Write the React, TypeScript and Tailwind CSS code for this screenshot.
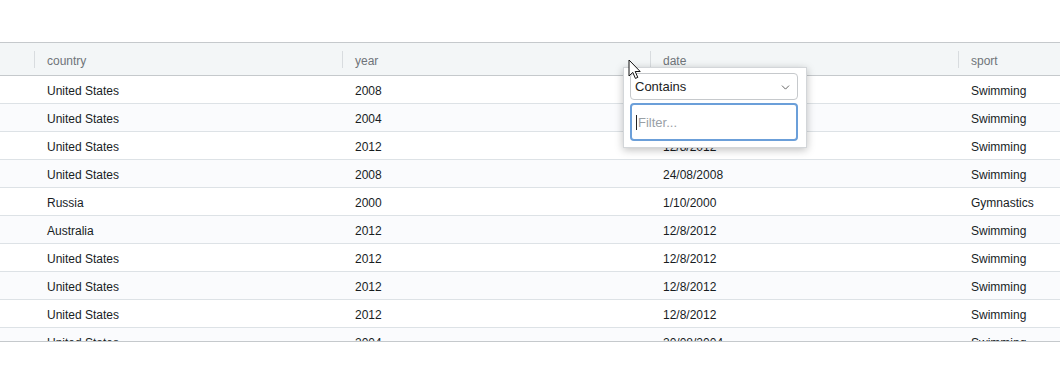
import { ChevronDown } from "lucide-react";

const rows = [
  ["United States", "2008", "24/08/2008", "Swimming"],
  ["United States", "2004", "29/08/2004", "Swimming"],
  ["United States", "2012", "12/8/2012", "Swimming"],
  ["United States", "2008", "24/08/2008", "Swimming"],
  ["Russia", "2000", "1/10/2000", "Gymnastics"],
  ["Australia", "2012", "12/8/2012", "Swimming"],
  ["United States", "2012", "12/8/2012", "Swimming"],
  ["United States", "2012", "12/8/2012", "Swimming"],
  ["United States", "2012", "12/8/2012", "Swimming"],
  ["United States", "2004", "20/08/2004", "Swimming"],
];

const headers = ["country", "year", "date", "sport"];

export default function App() {
  return (
    <div className="relative w-[1060px] h-[392px] bg-white pt-[42px] text-[12px] font-['Liberation_Sans',sans-serif] overflow-hidden">
      <div className="h-[300px] border-y border-[#c5c9cc] overflow-hidden">
        {/* header */}
        <div className="flex h-[33px] bg-[#f3f6f7] border-b border-[#c5c9cc] text-[#6f7479]">
          <div className="w-[35px] shrink-0" />
          {headers.map((h) => (
            <div key={h} className="relative w-[308px] shrink-0 flex items-center pl-[12px] pt-[3px]">
              <span className="absolute left-[-1px] top-[8px] h-[17px] w-px bg-[#d8dcdf]" />
              {h}
            </div>
          ))}
        </div>
        {/* rows */}
        {rows.map((r, i) => (
          <div
            key={i}
            className={`flex h-[28px] border-b border-[#dde2e6] text-[#181d1f] ${i % 2 === 1 ? "bg-[#fafbfd]" : "bg-white"}`}
          >
            <div className="w-[35px] shrink-0" />
            {r.map((c, j) => (
              <div key={j} className="w-[308px] shrink-0 flex items-center pl-[12px] pt-[3px]">
                {c}
              </div>
            ))}
          </div>
        ))}
      </div>

      {/* filter popup */}
      <div className="absolute left-[623px] top-[67px] w-[184px] bg-white border border-[#d3d6d9] shadow-[0_2px_8px_rgba(0,0,0,0.25)] pl-[6px] pr-[8px] pt-[5px] pb-[6px] flex flex-col gap-[3px] text-[13px]">
        <div className="h-[27px] rounded-[4px] border border-[#c6c9cc] flex items-center justify-between pl-[4px] pr-[5px] pt-[1px] text-[#222]">
          <span>Contains</span>
          <ChevronDown size={13} strokeWidth={1.5} className="text-[#444]" />
        </div>
        <div className="h-[38px] rounded-[4px] border-2 border-[#6b9fd9] flex items-center pl-[4px] pt-[1px] text-[#9aa0a6]">
          <span className="w-px h-[15px] bg-[#222] mr-[1px]" />
          Filter...
        </div>
      </div>

      {/* mouse cursor */}
      <svg className="absolute left-[628px] top-[59px]" width="14" height="22" viewBox="0 0 14 22">
        <path d="M1 1 L1 17 L4.8 13.4 L7.4 19.4 L9.8 18.4 L7.2 12.5 L12.2 12.5 Z" fill="white" stroke="#111" strokeWidth="1" strokeLinejoin="round" />
      </svg>
    </div>
  );
}
